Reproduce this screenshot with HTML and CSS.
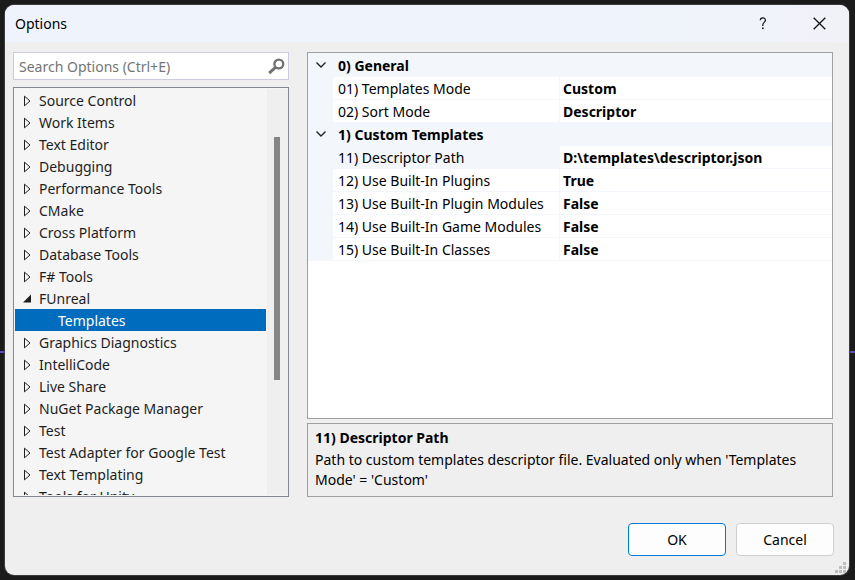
FILE: index.html
```html
<!DOCTYPE html>
<html lang="en">
<head>
<meta charset="utf-8">
<title>Options</title>
<link rel="stylesheet" href="styles.css">
</head>
<body>
<svg class="defs" aria-hidden="true">
  <symbol id="closed" viewBox="0 0 8 12"><path d="M1.5 1.2V10.8L7 6Z" fill="none" stroke="#1e1e1e"/></symbol>
  <symbol id="open" viewBox="0 0 8 12"><path d="M8 1.500V9.500H0Z" fill="#1e1e1e"/></symbol>
  <symbol id="chevron" viewBox="0 0 10 6"><path d="M.5 .5L5 5L9.500 .5" fill="none" stroke="#222" stroke-width="1.4"/></symbol>
</svg>
<div class="dialog" role="dialog" aria-labelledby="title">
  <header class="titlebar">
    <h1 id="title">Options</h1>
    <button class="caption" type="button" aria-label="Help"><svg width="8" height="13" viewBox="0 0 8 13"><path d="M1.300 3.200C1.300 1.500 2.300 .8 3.800 .8C5.300 .8 6.400 1.600 6.400 3.200C6.400 5.400 3.800 5.500 3.800 8V9" fill="none" stroke="#111" stroke-width="1.200"/><rect x="3" y="10.500" width="1.600" height="1.600" fill="#111"/></svg></button>
    <button class="caption" type="button" aria-label="Close"><svg width="13" height="13" viewBox="0 0 13 13"><path d="M.7 .7L12.300 12.300M12.300 .7L.7 12.300" stroke="#111" stroke-width="1.300"/></svg></button>
  </header>
  <main class="content">
    <div class="side">
      <div class="search">
        <input type="text" aria-label="Search Options" placeholder="Search Options (Ctrl+E)">
        <svg width="17" height="17" viewBox="0 0 17 17"><circle cx="10.800" cy="6" r="4.400" fill="none" stroke="#717171" stroke-width="2.400"/><path d="M7.700 9.200L1.200 15.200" stroke="#717171" stroke-width="3"/></svg>
      </div>
      <div class="tree-box">
        <ul class="tree" role="tree">
          <li role="treeitem"><svg><use href="#closed"/></svg>Source Control</li>
          <li role="treeitem"><svg><use href="#closed"/></svg>Work Items</li>
          <li role="treeitem"><svg><use href="#closed"/></svg>Text Editor</li>
          <li role="treeitem"><svg><use href="#closed"/></svg>Debugging</li>
          <li role="treeitem"><svg><use href="#closed"/></svg>Performance Tools</li>
          <li role="treeitem"><svg><use href="#closed"/></svg>CMake</li>
          <li role="treeitem"><svg><use href="#closed"/></svg>Cross Platform</li>
          <li role="treeitem"><svg><use href="#closed"/></svg>Database Tools</li>
          <li role="treeitem"><svg><use href="#closed"/></svg>F# Tools</li>
          <li role="treeitem"><svg><use href="#open"/></svg>FUnreal</li>
          <li role="treeitem" class="child selected" aria-selected="true">Templates</li>
          <li role="treeitem"><svg><use href="#closed"/></svg>Graphics Diagnostics</li>
          <li role="treeitem"><svg><use href="#closed"/></svg>IntelliCode</li>
          <li role="treeitem"><svg><use href="#closed"/></svg>Live Share</li>
          <li role="treeitem"><svg><use href="#closed"/></svg>NuGet Package Manager</li>
          <li role="treeitem"><svg><use href="#closed"/></svg>Test</li>
          <li role="treeitem"><svg><use href="#closed"/></svg>Test Adapter for Google Test</li>
          <li role="treeitem"><svg><use href="#closed"/></svg>Text Templating</li>
          <li role="treeitem"><svg><use href="#closed"/></svg>Tools for Unity</li>
        </ul>
        <div class="scrollbar"><div class="thumb"></div></div>
      </div>
    </div>
    <div class="details">
      <div class="properties">
        <table>
          <colgroup><col class="gutter-col"><col class="name-col"><col></colgroup>
          <tbody>
            <tr class="category"><td><svg><use href="#chevron"/></svg></td><th colspan="2">0) General</th></tr>
            <tr><td></td><th>01) Templates Mode</th><td>Custom</td></tr>
            <tr><td></td><th>02) Sort Mode</th><td>Descriptor</td></tr>
          </tbody>
          <tbody>
            <tr class="category"><td><svg><use href="#chevron"/></svg></td><th colspan="2">1) Custom Templates</th></tr>
            <tr class="current"><td></td><th>11) Descriptor Path</th><td>D:\templates\descriptor.json</td></tr>
            <tr><td></td><th>12) Use Built-In Plugins</th><td>True</td></tr>
            <tr><td></td><th>13) Use Built-In Plugin Modules</th><td>False</td></tr>
            <tr><td></td><th>14) Use Built-In Game Modules</th><td>False</td></tr>
            <tr><td></td><th>15) Use Built-In Classes</th><td>False</td></tr>
          </tbody>
        </table>
      </div>
      <section class="help">
        <h2>11) Descriptor Path</h2>
        <p>Path to custom templates descriptor file. Evaluated only when 'Templates Mode' = 'Custom'</p>
      </section>
    </div>
  </main>
  <footer class="actions">
    <button class="button primary" type="button">OK</button>
    <button class="button" type="button">Cancel</button>
  </footer>
  <svg class="grip" width="11" height="11" viewBox="0 0 11 11" fill="#bdbdbd"><path d="M8 0h3v3h-3zM4 4h3v3h-3zM8 4h3v3h-3zM0 8h3v3h-3zM4 8h3v3h-3zM8 8h3v3h-3z"/></svg>
</div>
</body>
</html>
```
FILE: styles.css
```css
* { box-sizing: border-box; }

body {
  margin: 0;
  height: 100vh;
  padding: 5px 6px 5px 5px;
  background: linear-gradient(#5b4bc4, #5b4bc4) 0 351px / 100% 2px no-repeat #1b1b1b;
  font: 14px/20px "Noto Sans", "Open Sans", sans-serif;
  color: #000;
}

.defs { position: absolute; width: 0; height: 0; }

.dialog {
  position: relative;
  display: flex;
  flex-direction: column;
  height: 100%;
  overflow: hidden;
  border-radius: 9px;
  background: #efefef;
  box-shadow: 0 0 0 1px #3c3c3c;
}

.titlebar {
  display: flex;
  align-items: center;
  height: 37px;
  flex: none;
  padding: 0 1px 0 10px;
  background: linear-gradient(90deg, #eff3fb 75%, #f1f2f8);
}

.titlebar h1 {
  flex: 1;
  margin: 0;
  font-size: 14px;
  font-weight: 400;
}

.caption {
  display: grid;
  place-items: center;
  width: 57px;
  height: 36px;
  padding: 0;
  border: 0;
  background: none;
}

.content {
  flex: 1;
  min-height: 0;
  display: grid;
  grid-template-columns: 276px minmax(0, 1fr);
  gap: 18px;
  padding: 10px 16px 0 8px;
}

.side, .details {
  display: flex;
  flex-direction: column;
  min-height: 0;
}

.side { gap: 7px; }
.details { gap: 4px; }

.search {
  display: flex;
  align-items: center;
  height: 28px;
  flex: none;
  padding: 0 3px 0 5px;
  border: 1px solid #ccccdf;
  background: #fff;
}

.search input {
  flex: 1;
  min-width: 0;
  padding: 2px 0 0;
  border: 0;
  outline: 0;
  background: none;
  font: inherit;
}

.search input::placeholder { color: #757575; opacity: 1; }

.tree-box {
  flex: 1;
  min-height: 0;
  display: flex;
  padding: 1px 0 1px 1px;
  border: 1px solid #828790;
  background: #f5f5f5;
}

.tree {
  flex: 1;
  margin: 0 1px 0 0;
  padding: 0;
  overflow: hidden;
  list-style: none;
  color: #1e1e1e;
}

.tree li {
  display: flex;
  align-items: center;
  gap: 8px;
  height: 22px;
  padding: 2px 0 0 8px;
  white-space: nowrap;
}

.tree svg { width: 8px; height: 12px; }
.tree .child { padding-left: 43px; }
.tree .selected { background: #006cbe; color: #fff; }

.scrollbar {
  width: 21px;
  padding: 48px 0 0 7px;
  background: #efefef;
}

.thumb { width: 6px; height: 243px; background: #858585; }

.properties {
  flex: 1;
  min-height: 0;
  padding-top: 1px;
  overflow: hidden;
  border: 1px solid #a0a0a0;
  background: #fff;
}

table {
  width: 100%;
  table-layout: fixed;
  border-collapse: separate;
  border-spacing: 0;
}

.gutter-col { width: 25px; }
.name-col { width: 227px; }

th, td {
  height: 23px;
  padding: 2px 0 0 3px;
  border-bottom: 1px solid #f3f7fc;
  line-height: 20px;
  text-align: left;
  font-weight: 700;
  white-space: nowrap;
}

th {
  padding-left: 5px;
  border-right: 1px solid #f3f7fc;
  font-weight: 400;
}

td:first-child, .category th, .current th { background: #f3f7fc; }
td:first-child { padding: 0 0 0 8px; }
.category th { font-weight: 700; }
td svg { display: block; width: 10px; height: 6px; }

.properties { background: linear-gradient(#f3f7fc, #f3f7fc) 0 0 / 100% 1px no-repeat #fff; }

.help {
  height: 74px;
  flex: none;
  padding: 4px 7px;
  border: 1px solid #a0a0a0;
}

.help h2 {
  margin: 0 0 2px;
  font-size: 14px;
  font-weight: 700;
}

.help p { margin: 0; }

.actions {
  display: flex;
  justify-content: flex-end;
  gap: 10px;
  padding: 26px 15px 19px;
}

.button {
  width: 98px;
  height: 33px;
  padding: 0;
  border: 1px solid #d0d0d0;
  border-radius: 4px;
  background: #fdfdfd;
  font: inherit;
  color: #000;
}

.primary { border-color: #0078d4; }

.grip { position: absolute; right: 3px; bottom: 2px; }
```
